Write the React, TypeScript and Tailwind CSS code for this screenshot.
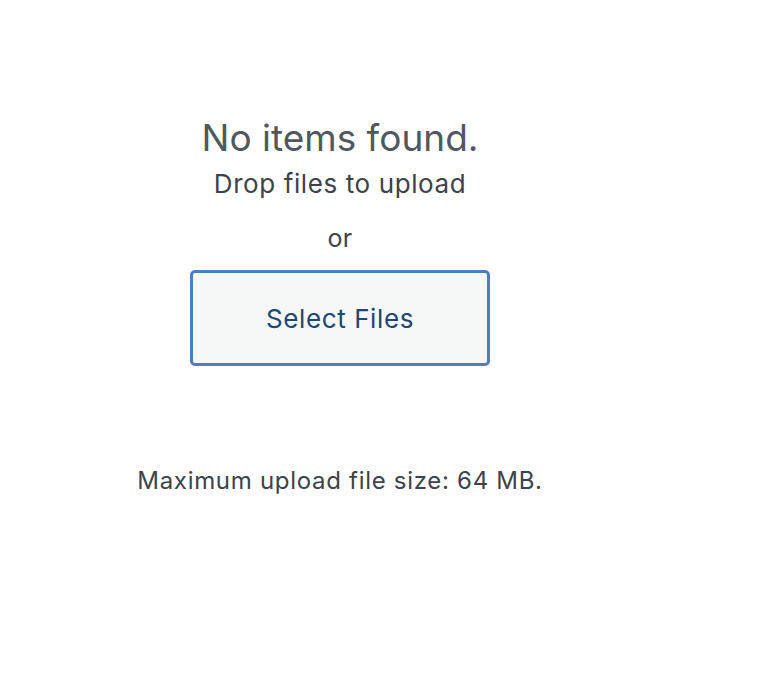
export default function App() {
  return (
    <div className="min-h-[674px] w-full bg-white font-['Inter','Noto_Sans',sans-serif]">
      <div className="flex w-[680px] flex-col items-center pt-[114px] text-center">
        <h2 className="text-[37px] leading-[48px] font-normal text-[#50575e]">No items found.</h2>
        <p className="mt-[6px] text-[26px] leading-[32px] tracking-[0.6px] text-[#3c434a]">Drop files to upload</p>
        <p className="mt-[23px] text-[25px] leading-[30px] tracking-[0.3px] text-[#3c434a]">or</p>
        <button className="mt-[17px] h-[96px] w-[300px] rounded-[5px] border-[3px] border-[#4a7fc1] bg-[#f6f7f7] text-[26px] tracking-[0.6px] text-[#1f4674]">
          Select Files
        </button>
        <p className="mt-[100px] text-[24px] leading-[30px] tracking-[0.7px] text-[#3c434a]">Maximum upload file size: 64 MB.</p>
      </div>
    </div>
  );
}
